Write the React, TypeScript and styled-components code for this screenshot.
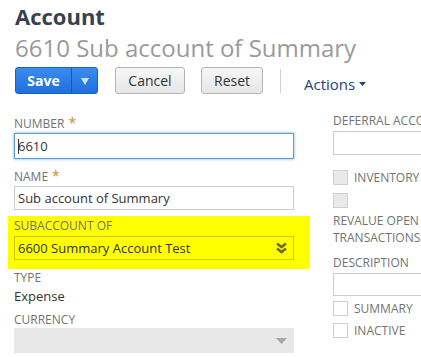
import styled, { createGlobalStyle } from "styled-components";

const GlobalStyle = createGlobalStyle`
  html, body {
    margin: 0;
    padding: 0;
    overflow: hidden;
    background: #ffffff;
    font-family: "Open Sans", "Liberation Sans", sans-serif;
  }
`;

const Page = styled.div`
  padding: 3px 0 0 14px;
  width: 700px;
`;

const Title = styled.h1`
  margin: 0 0 0 1px;
  font-size: 22px;
  line-height: 26px;
  font-weight: 700;
  color: #38414f;
`;

const Subtitle = styled.h2`
  margin: 5px 0 0 1px;
  font-size: 24px;
  line-height: 28px;
  font-weight: 400;
  color: #9a9a9a;
`;

const ButtonBar = styled.div`
  display: flex;
  align-items: center;
  margin: 5px 0 0 1px;
  height: 27px;
`;

const SaveGroup = styled.div`
  display: flex;
  height: 27px;
  border: 1px solid #1c5fc0;
  border-radius: 3px;
  background: linear-gradient(#3a8cf0, #1f6fdc);
  box-sizing: border-box;
  overflow: hidden;
`;

const SaveMain = styled.button`
  width: 56px;
  border: none;
  background: transparent;
  color: #fff;
  font-family: inherit;
  font-weight: 700;
  font-size: 14px;
  padding: 0;
  border-right: 1px solid #1a58b4;
`;

const SaveArrow = styled.div`
  width: 25px;
  display: flex;
  align-items: center;
  justify-content: center;
`;

const Button = styled.button<{ $w: number; $ml: number }>`
  margin-left: ${(p) => p.$ml}px;
  width: ${(p) => p.$w}px;
  height: 27px;
  box-sizing: border-box;
  border: 1px solid #b4b4b4;
  border-radius: 3px;
  background: linear-gradient(#f7f7f7, #e6e6e6);
  color: #333;
  font-family: inherit;
  font-size: 14px;
  padding: 0;
`;

const Divider = styled.div`
  width: 1px;
  height: 24px;
  background: #d2d2d2;
  margin-left: 17px;
`;

const Actions = styled.div`
  margin-left: 23px;
  margin-top: 7px;
  display: flex;
  align-items: center;
  gap: 4px;
  font-size: 15px;
  color: #24427a;
`;

const Columns = styled.div`
  display: grid;
  grid-template-columns: 280px 300px;
  column-gap: 39px;
  margin-top: 21px;
`;

const Column = styled.div`
  display: flex;
  flex-direction: column;
`;

const Label = styled.div<{ $mt?: number; $mb?: number }>`
  margin-top: ${(p) => p.$mt ?? 0}px;
  margin-bottom: ${(p) => p.$mb ?? 1}px;
  font-size: 12px;
  line-height: 16px;
  color: #737373;
  text-transform: uppercase;
  white-space: nowrap;
`;

const Star = styled.span`
  color: #c98c3a;
  margin-left: 4px;
  font-size: 14px;
`;

const Input = styled.div<{ $h: number; $focus?: boolean }>`
  position: relative;
  height: ${(p) => p.$h}px;
  box-sizing: border-box;
  border: 1px solid ${(p) => (p.$focus ? "#5a9ad8" : "#cccccc")};
  box-shadow: ${(p) => (p.$focus ? "0 0 3px rgba(70,140,215,0.7)" : "none")};
  background: #fff;
  display: flex;
  align-items: center;
  padding-left: 3px;
  font-size: 13px;
  color: #333;
`;

const Caret = styled.span`
  position: absolute;
  left: 3px;
  top: 5px;
  width: 1px;
  height: 15px;
  background: #333;
`;

const Highlight = styled.div`
  background: #ffff00;
  margin: 6px -16px 0 -6px;
  padding: 2px 16px 9px 6px;
  display: flex;
  flex-direction: column;
`;

const Select = styled.div<{ $h: number; $disabled?: boolean }>`
  height: ${(p) => p.$h}px;
  box-sizing: border-box;
  border: 1px solid ${(p) => (p.$disabled ? "#e8e8e8" : "#c9c900")};
  background: ${(p) => (p.$disabled ? "#e8e8e8" : "transparent")};
  display: flex;
  align-items: center;
  justify-content: space-between;
  padding: 0 6px 0 3px;
  font-size: 13px;
  color: #333;
`;

const Value = styled.div`
  font-size: 13px;
  line-height: 20px;
  color: #333;
`;

const CheckRow = styled.div<{ $mt: number }>`
  display: flex;
  align-items: center;
  gap: 6px;
  margin-top: ${(p) => p.$mt}px;
  height: 15px;
  font-size: 12px;
  color: #737373;
  text-transform: uppercase;
`;

const Box = styled.span<{ $disabled?: boolean }>`
  width: 15px;
  height: 15px;
  box-sizing: border-box;
  border: 1px solid #cfcfcf;
  background: ${(p) => (p.$disabled ? "#e9e9e9" : "#fff")};
`;

const TwoLine = styled(Label)`
  line-height: 17px;
`;

export default function App() {
  return (
    <Page>
      <GlobalStyle />
      <Title>Account</Title>
      <Subtitle>6610 Sub account of Summary</Subtitle>
      <ButtonBar>
        <SaveGroup>
          <SaveMain>Save</SaveMain>
          <SaveArrow>
            <svg width="8" height="8" viewBox="0 0 8 8">
              <path d="M0 1 L8 1 L4 8 Z" fill="#cfe1fb" />
            </svg>
          </SaveArrow>
        </SaveGroup>
        <Button $w={70} $ml={17}>Cancel</Button>
        <Button $w={62} $ml={16}>Reset</Button>
        <Divider />
        <Actions>
          Actions
          <svg width="7" height="4" viewBox="0 0 7 4">
            <path d="M0 0 L7 0 L3.5 4 Z" fill="#24427a" />
          </svg>
        </Actions>
      </ButtonBar>
      <Columns>
        <Column>
          <Label>
            Number<Star>*</Star>
          </Label>
          <Input $h={26} $focus>
            <Caret />
            6610
          </Input>
          <Label $mt={9}>
            Name<Star>*</Star>
          </Label>
          <Input $h={24}>Sub account of Summary</Input>
          <Highlight>
            <Label $mb={2}>Subaccount of</Label>
            <Select $h={24}>
              6600 Summary Account Test
              <svg width="11" height="12" viewBox="0 0 11 12">
                <path
                  d="M1 1.5 L5.5 5 L10 1.5 M1 6.5 L5.5 10 L10 6.5"
                  fill="none"
                  stroke="#6e6e10"
                  strokeWidth="2.6"
                />
              </svg>
            </Select>
          </Highlight>
          <Label $mt={1} $mb={0}>Type</Label>
          <Value>Expense</Value>
          <Label $mt={6} $mb={0}>Currency</Label>
          <Select $h={25} $disabled>
            <span />
            <svg width="11" height="6" viewBox="0 0 11 6">
              <path d="M0 0 L11 0 L5.5 6 Z" fill="#a8a8a8" />
            </svg>
          </Select>
        </Column>
        <Column>
          <Label $mt={-2} $mb={2}>Deferral Account</Label>
          <Input $h={24} />
          <CheckRow $mt={15}>
            <Box $disabled />
            Inventory
          </CheckRow>
          <CheckRow $mt={8}>
            <Box $disabled />
          </CheckRow>
          <TwoLine $mt={4} $mb={0}>
            Revalue open
            <br />
            Transactions
          </TwoLine>
          <Label $mt={9} $mb={2}>Description</Label>
          <Input $h={23} />
          <CheckRow $mt={5}>
            <Box />
            Summary
          </CheckRow>
          <CheckRow $mt={7}>
            <Box />
            Inactive
          </CheckRow>
        </Column>
      </Columns>
    </Page>
  );
}
